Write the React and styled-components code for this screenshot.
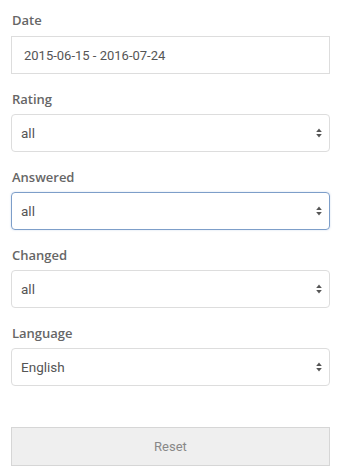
import React from 'react';
import styled, { createGlobalStyle } from 'styled-components';

const GlobalStyle = createGlobalStyle`
  html, body {
    margin: 0;
    padding: 0;
    background: #fff;
  }
`;

const Panel = styled.form`
  box-sizing: border-box;
  width: 339px;
  padding: 11px 9px 0 11px;
  display: flex;
  flex-direction: column;
`;

const Field = styled.div`
  display: flex;
  flex-direction: column;
  margin-bottom: 16px;
`;

const Label = styled.label`
  font-family: 'Open Sans', sans-serif;
  font-weight: 600;
  font-size: 13px;
  line-height: 18px;
  color: #666;
  margin: 0 0 7px 1px;
`;

const TextInput = styled.div`
  box-sizing: border-box;
  height: 38px;
  border: 1px solid #ddd;
  padding: 0 12px;
  display: flex;
  align-items: center;
  font-family: Roboto, sans-serif;
  font-size: 13px;
  color: #555;
`;

const SelectBox = styled.div`
  box-sizing: border-box;
  height: 38px;
  margin-top: -1px;
  border: 1px solid ${(p) => (p.$focused ? '#7d9ec9' : '#ddd')};
  border-radius: 4px;
  box-shadow: ${(p) => (p.$focused ? '0 0 2px rgba(102, 140, 200, 0.35)' : 'none')};
  padding: 0 7px 0 9px;
  display: flex;
  align-items: center;
  justify-content: space-between;
  font-family: Roboto, sans-serif;
  font-size: 13.5px;
  color: #555;
`;

const Arrows = () => (
  <svg width="6" height="10" viewBox="0 0 6 10">
    <path d="M3 0.5 L5.8 4 L0.2 4 Z" fill="#555" />
    <path d="M3 9.5 L5.8 6 L0.2 6 Z" fill="#555" />
  </svg>
);

const ResetButton = styled.button`
  box-sizing: border-box;
  margin-top: 25px;
  height: 39px;
  width: 100%;
  border: 1px solid #d6d6d6;
  background: #efefef;
  font-family: Roboto, sans-serif;
  font-size: 13px;
  color: #888;
  border-radius: 0;
`;

const selects = [
  { label: 'Rating', value: 'all' },
  { label: 'Answered', value: 'all', focused: true },
  { label: 'Changed', value: 'all' },
  { label: 'Language', value: 'English' },
];

export default function App() {
  return (
    <>
      <GlobalStyle />
      <Panel>
        <Field>
          <Label>Date</Label>
          <TextInput>2015-06-15 - 2016-07-24</TextInput>
        </Field>
        {selects.map((s) => (
          <Field key={s.label}>
            <Label>{s.label}</Label>
            <SelectBox $focused={s.focused}>
              <span>{s.value}</span>
              <Arrows />
            </SelectBox>
          </Field>
        ))}
        <ResetButton type="button">Reset</ResetButton>
      </Panel>
    </>
  );
}
